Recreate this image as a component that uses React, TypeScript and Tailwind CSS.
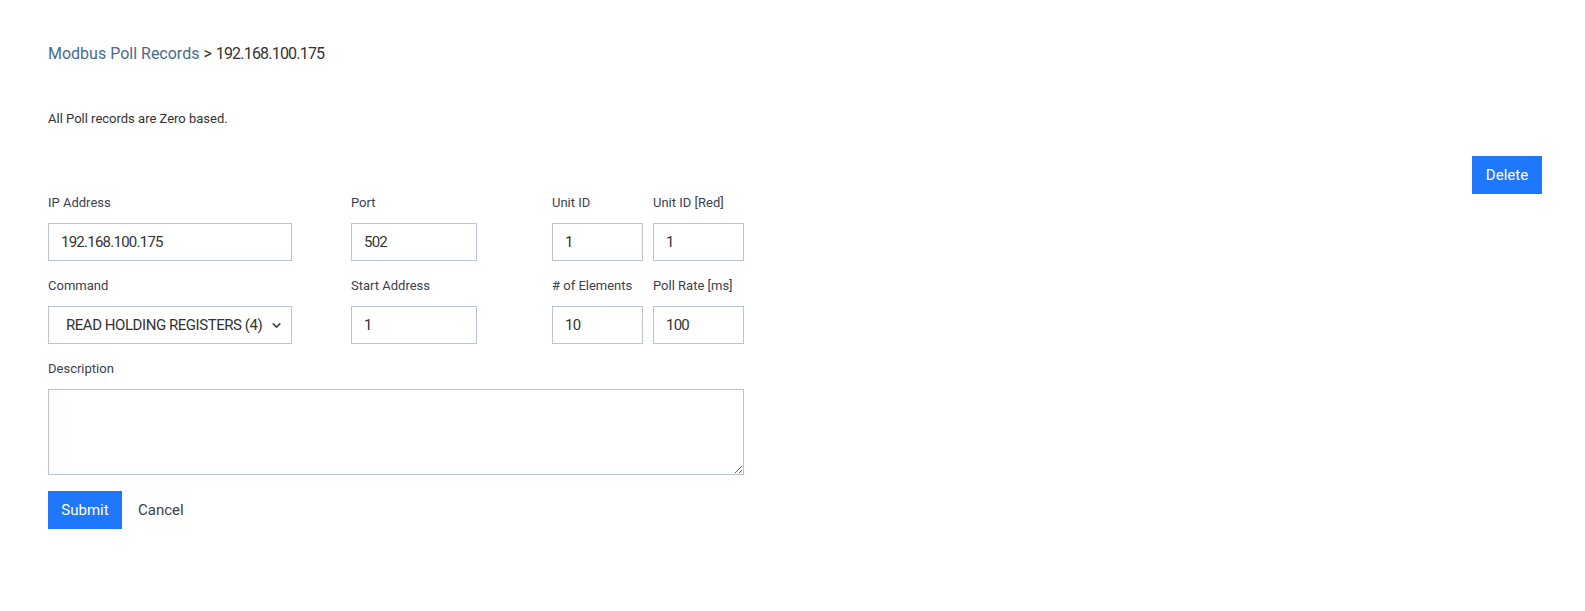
import { ChevronDown } from "lucide-react";

const inputCls =
  "h-[38px] border border-[#b9c5d6] bg-white px-3 text-[15px] text-[#333] outline-none";

function Field({
  label,
  value,
  width,
}: {
  label: string;
  value: string;
  width: string;
}) {
  return (
    <div className="flex flex-col">
      <label className="mb-[11px] text-[13px] leading-[18px] text-[#3b4150]">
        {label}
      </label>
      <input
        className={`${inputCls} ${width} tracking-[-0.05em]`}
        defaultValue={value}
      />
    </div>
  );
}

export default function App() {
  return (
    <div
      className="min-h-[611px] bg-white pl-12 pr-[43px] pt-[44px] text-[#333]"
      style={{ fontFamily: "Roboto, 'Noto Sans', sans-serif" }}
    >
      <div className="text-[16px] leading-[20px]">
        <a href="#" className="text-[#486b8e]">
          Modbus Poll Records
        </a>
        <span className="text-[#333]">
          {" "}
          &gt; <span className="tracking-[-0.05em]">192.168.100.175</span>
        </span>
      </div>

      <p className="mt-[46px] text-[13px] leading-[18px] text-[#333]">
        All Poll records are Zero based.
      </p>

      <div className="mt-[28px] flex justify-end">
        <button className="h-[38px] w-[70px] bg-[#1f78fc] text-[15px] text-white">
          Delete
        </button>
      </div>

      <form className="w-[696px]">
        <div className="grid grid-cols-[303px_201px_101px_91px]">
          <Field label="IP Address" value="192.168.100.175" width="w-[244px]" />
          <Field label="Port" value="502" width="w-[126px]" />
          <Field label="Unit ID" value="1" width="w-[91px]" />
          <Field label="Unit ID [Red]" value="1" width="w-[91px]" />
        </div>

        <div className="mt-[16px] grid grid-cols-[303px_201px_101px_91px]">
          <div className="flex flex-col">
            <label className="mb-[11px] text-[13px] leading-[18px] text-[#3b4150]">
              Command
            </label>
            <div className="relative w-[244px]">
              <select
                className={`${inputCls} w-full appearance-none pl-[17px] pr-6 text-[14px] tracking-[-0.03em]`}
                defaultValue="4"
              >
                <option value="4">READ HOLDING REGISTERS (4)</option>
              </select>
              <ChevronDown
                className="pointer-events-none absolute right-[9px] top-[13px] h-[13px] w-[13px] text-[#444]"
                strokeWidth={3}
              />
            </div>
          </div>
          <Field label="Start Address" value="1" width="w-[126px]" />
          <Field label="# of Elements" value="10" width="w-[91px]" />
          <Field label="Poll Rate [ms]" value="100" width="w-[91px]" />
        </div>

        <div className="mt-[16px] flex flex-col">
          <label className="mb-[11px] text-[13px] leading-[18px] text-[#3b4150]">
            Description
          </label>
          <textarea className="h-[86px] w-full border border-[#b9c5d6] bg-white px-3 py-2 text-[15px] outline-none" />
        </div>

        <div className="mt-[16px] flex items-center gap-4">
          <button
            type="button"
            className="h-[38px] w-[74px] bg-[#1f78fc] text-[15px] text-white"
          >
            Submit
          </button>
          <button type="button" className="text-[15px] text-[#3a3f50]">
            Cancel
          </button>
        </div>
      </form>
    </div>
  );
}
